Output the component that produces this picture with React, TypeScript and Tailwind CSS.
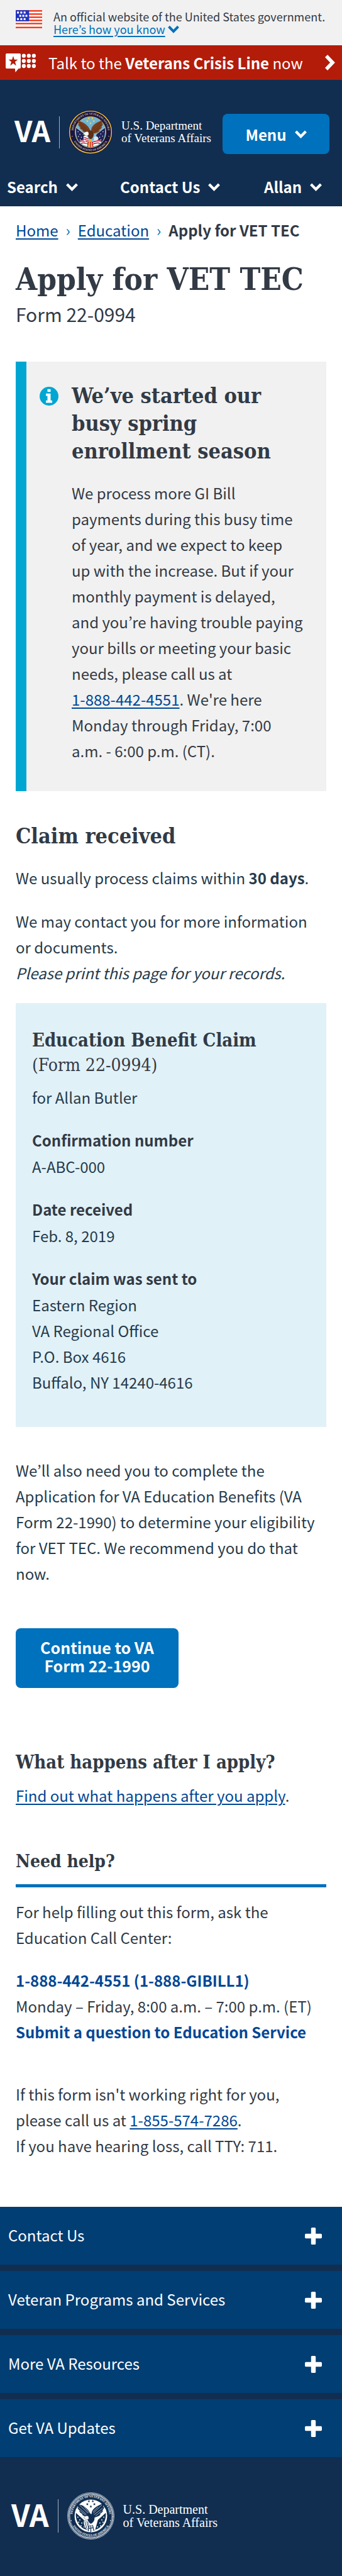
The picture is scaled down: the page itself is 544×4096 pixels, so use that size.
import type { ReactNode } from "react";

function ChevronDown({ className }: { className: string }) {
  return (
    <svg viewBox="0 0 19 13" className={className} fill="none" stroke="currentColor" strokeWidth="4.2" aria-hidden="true">
      <path d="M1.6 2 L9.5 10 L17.4 2" />
    </svg>
  );
}

function Flag() {
  const stars = [
    [5, 5], [18, 5], [31, 5],
    [14, 17], [26, 17], [38, 17],
    [5, 29], [18, 29], [31, 29],
  ];
  return (
    <svg viewBox="0 0 150 102" className="h-[29px] w-[42px] shrink-0" aria-hidden="true">
      <rect width="150" height="102" fill="#fff" />
      {[0, 18, 36, 54, 72, 94].map((y) => (
        <rect key={y} y={y} width="150" height="8" fill="#f22c0c" />
      ))}
      <rect width="76" height="63" fill="#2233c0" />
      {stars.map(([x, y]) => (
        <rect key={`${x}-${y}`} x={x * 1.45} y={y * 1.55} width="11" height="11" fill="#fff" />
      ))}
    </svg>
  );
}

function CrisisIcon() {
  return (
    <svg viewBox="0 0 168 105" className="h-[30px] w-[48px] shrink-0" fill="#fff" aria-hidden="true">
      <path d="M6 0H78Q84 0 84 6V78Q84 84 78 84H72L54 105L52 84H6Q0 84 0 78V6Q0 0 6 0Z" />
      <path
        fill="#b31c09"
        d="M42 14 L48.5 34.5 H68 L52.5 46.5 L58.5 68 L42 55 L25.5 68 L31.5 46.5 L16 34.5 H35.5 Z"
      />
      {[13, 42, 70].map((y) =>
        [101, 129, 157].map((x) => <circle key={`${x}-${y}`} cx={x} cy={y} r="11" />)
      )}
    </svg>
  );
}

const STAR = "M0 -7 L1.8 -2.2 L6.8 -2.2 L2.8 1 L4.3 6 L0 3 L-4.3 6 L-2.8 1 L-6.8 -2.2 L-1.8 -2.2 Z";
const SEAL_STARS = [[110, 45], [130, 45], [102, 60], [138, 60], [120, 72]];
const LEFT_WING =
  "M52 54 C58 62 64 62 70 64 C84 68 96 78 108 92 L120 112 L104 122 C92 124 82 120 74 112 L80 110 C70 108 64 102 60 95 L67 95 C58 90 53 84 52 76 L58 78 C52 70 50 62 52 54 Z";
const RIGHT_WING =
  "M180 54 C174 62 166 62 160 66 C146 72 134 82 126 96 L122 118 L140 128 C152 124 164 120 170 112 L165 110 C174 106 180 100 183 92 L176 94 C184 87 188 80 188 72 L182 76 C186 68 184 60 180 54 Z";

function SealText({ id, fill }: { id: string; fill: string }) {
  return (
    <>
      <path id={`${id}-top`} d="M30.5 150 A94.5 94.5 0 1 1 209.5 150" fill="none" />
      <path id={`${id}-bottom`} d="M15 128 A105.5 105.5 0 0 0 225 128" fill="none" />
      <g className="font-['Liberation_Serif',serif] text-[15px] font-bold" fill={fill} textAnchor="middle">
        <text>
          <textPath href={`#${id}-top`} startOffset="50%">DEPARTMENT OF VETERANS AFFAIRS</textPath>
        </text>
        <text>
          <textPath href={`#${id}-bottom`} startOffset="50%">UNITED STATES OF AMERICA</textPath>
        </text>
      </g>
      <circle cx="20" cy="143" r="2.5" fill={fill} />
      <circle cx="220" cy="143" r="2.5" fill={fill} />
    </>
  );
}

function ColorSeal() {
  return (
    <svg viewBox="0 0 240 240" className="size-[70px] shrink-0" aria-hidden="true">
      <circle cx="120" cy="120" r="120" fill="#191545" />
      <circle cx="120" cy="120" r="114.5" fill="none" stroke="#f2c53d" strokeWidth="5" />
      <circle cx="120" cy="120" r="84" fill="#6fb4d6" stroke="#d9b24a" strokeWidth="3" />
      <SealText id="seal-color" fill="#d8c58a" />
      {SEAL_STARS.map(([x, y]) => (
        <path key={`${x}-${y}`} d={STAR} transform={`translate(${x} ${y})`} fill="#f5d33c" />
      ))}
      <path d="M42 96 L84 128 L96 168 L60 176 C46 160 38 130 42 96 Z" fill="#1f2459" />
      <path d="M198 96 L154 126 L146 168 L180 176 C194 160 202 130 198 96 Z" fill="#1f2459" />
      {[[52, 118], [62, 132], [54, 144], [70, 148], [64, 162], [188, 118], [176, 130], [186, 142], [170, 148], [176, 162]].map(([x, y]) => (
        <circle key={`${x}-${y}`} cx={x} cy={y} r="2.6" fill="#fff" />
      ))}
      <path d="M58 170 C74 160 92 160 118 172 L110 196 C92 196 70 188 58 170 Z" fill="#fff" />
      <path d="M182 170 C166 160 148 160 122 172 L130 196 C148 196 170 188 182 170 Z" fill="#fff" />
      <path d="M58 172 C78 164 96 170 116 178 M68 182 C84 174 98 180 114 188 M182 172 C162 164 146 170 124 178 M172 182 C156 174 142 180 126 188" stroke="#c8102e" strokeWidth="5" fill="none" />
      <path d="M40 94 L104 142 M200 94 L140 140" stroke="#e6d9b0" strokeWidth="3" />
      <path d={LEFT_WING} fill="#7a3f1c" />
      <path d={RIGHT_WING} fill="#7a3f1c" />
      <path d="M62 66 L104 108 M60 78 L98 112 M68 94 L94 114 M176 66 L134 108 M178 82 L138 116 M170 98 L144 120" stroke="#4c240f" strokeWidth="2" />
      <path d="M104 116 C116 108 132 112 136 124 C140 140 132 154 120 160 C108 154 100 136 104 116 Z" fill="#5f2e14" />
      <path d="M108 120 C100 116 88 120 84 128 L78 132 L88 134 C94 140 104 140 110 134 Z" fill="#fff" />
      <path d="M84 128 L78 133 L88 134 Z" fill="#f0b51f" />
      <path d="M82 142 C92 138 102 142 106 150 L112 176 L96 182 C86 170 80 156 82 142 Z" fill="#fff" />
      <path d="M84 148 L108 158 M86 158 L110 168 M92 169 L112 177" stroke="#c8102e" strokeWidth="4.5" />
      <path d="M138 148 C150 138 160 144 164 156 C156 168 146 168 138 162 Z" fill="#dbe7f0" />
      <path d="M112 160 L124 158 L132 196 L120 208 L106 196 Z" fill="#e8b93a" />
      <path d="M108 172 L104 202 M118 172 L120 206 M128 172 L134 202" stroke="#c8102e" strokeWidth="4" />
    </svg>
  );
}

function MonoSeal() {
  return (
    <svg viewBox="0 0 240 240" className="size-[75px] shrink-0" aria-hidden="true">
      <circle cx="120" cy="120" r="118.5" fill="none" stroke="#fff" strokeWidth="2" />
      <circle cx="120" cy="120" r="112" fill="none" stroke="#fff" strokeWidth="6.5" strokeDasharray="4.6 2.4" />
      <circle cx="120" cy="120" r="106.5" fill="none" stroke="#fff" strokeWidth="1.5" />
      <circle cx="120" cy="120" r="83" fill="#fff" />
      <SealText id="seal-mono" fill="#fff" />
      {SEAL_STARS.map(([x, y]) => (
        <path key={`${x}-${y}`} d={STAR} transform={`translate(${x} ${y})`} fill="#112e51" />
      ))}
      <path d="M44 104 L84 140 L98 190 C66 182 40 148 44 104 Z" fill="#112e51" />
      <path d="M196 104 L156 140 L142 190 C174 182 200 148 196 104 Z" fill="#112e51" />
      {[[54, 126], [64, 140], [58, 152], [74, 156], [70, 170], [86, 176], [186, 126], [176, 140], [182, 152], [166, 156], [170, 170], [154, 176]].map(([x, y]) => (
        <circle key={`${x}-${y}`} cx={x} cy={y} r="3" fill="#fff" />
      ))}
      <path d={LEFT_WING} fill="#112e51" />
      <path d={RIGHT_WING} fill="#112e51" />
      <path d="M62 64 L106 106 M58 78 L98 112 M66 94 L94 116 M84 72 L112 104 M176 64 L132 106 M180 80 L136 114 M174 96 L144 120 M156 74 L130 100" stroke="#fff" strokeWidth="2" />
      <path d="M104 112 C116 106 132 110 138 124 C142 142 132 154 120 160 C106 152 98 136 104 112 Z" fill="#112e51" />
      <path d="M44 98 L98 146 M196 98 L142 146" stroke="#fff" strokeWidth="8" />
      <path d="M108 122 C100 116 88 120 84 130 L92 136 C98 140 106 138 110 134 Z" fill="#fff" stroke="#112e51" strokeWidth="1.5" />
      <path d="M84 146 C94 142 104 148 108 156 L112 182 L98 190 C88 174 80 160 84 146 Z" fill="#fff" stroke="#112e51" strokeWidth="2" />
      <path d="M90 150 L100 184 M100 150 L108 180" stroke="#112e51" strokeWidth="3" />
      <path d="M112 164 L126 160 L140 196 L122 204 L106 198 Z" fill="#fff" />
      <path d="M112 168 L106 198 M120 166 L120 204 M128 166 L136 196 M110 184 L134 180" stroke="#112e51" strokeWidth="4" />
    </svg>
  );
}

function InfoIcon() {
  return (
    <svg viewBox="0 0 36 36" className="mt-2 size-[30px] shrink-0" aria-hidden="true">
      <circle cx="18" cy="18" r="18" fill="#00a6d2" />
      <path fill="#fff" d="M15 4.5h6v5h-6z M12 13h9v13h3v4.5H12V26h3v-8.5h-3z" />
    </svg>
  );
}

function PlusIcon() {
  return (
    <svg viewBox="0 0 27 27" className="size-[27px] shrink-0" fill="#fff" aria-hidden="true">
      <rect x="9.8" width="7.4" height="27" rx="1.6" />
      <rect y="9.8" width="27" height="7.4" rx="1.6" />
    </svg>
  );
}

function TextLink({ href, children }: { href: string; children: ReactNode }) {
  return (
    <a href={href} className="whitespace-nowrap text-[#004795] underline decoration-2 underline-offset-[3px]">
      {children}
    </a>
  );
}

const serif = "font-['DejaVu_Serif_Condensed','DejaVu_Serif',serif] text-[#323a45]";

const navItems = ["Search", "Contact Us", "Allan"];
const footerItems = ["Contact Us", "Veteran Programs and Services", "More VA Resources", "Get VA Updates"];

function DetailHeading({ children }: { children: ReactNode }) {
  return <h4 className="mt-[27px] leading-[42px] font-bold text-[#323a45]">{children}</h4>;
}

export default function App() {
  return (
    <div className="min-h-screen bg-white font-['Noto_Sans_CJK_KR','Open_Sans',sans-serif] text-[24px] leading-[41px] text-[#323a45]">
      <div className="flex gap-[18px] bg-[#f1f1f1] py-4 pl-[25px]">
        <Flag />
        <div className="text-[18px] leading-[20px]">
          <p>An official website of the United States government.</p>
          <button type="button" className="flex items-center gap-1 text-[#0071bc]">
            <span className="underline decoration-2 underline-offset-[3px]">Here’s how you know</span>
            <ChevronDown className="h-[13px] w-[18px]" />
          </button>
        </div>
      </div>

      <a href="#crisis-line" className="flex h-[55px] items-center bg-[#b31c09] pr-[11px] pl-[9px] leading-[55px] text-white">
        <CrisisIcon />
        <span className="ml-5 grow">
          Talk to the <b>Veterans Crisis Line</b> now
        </span>
        <svg viewBox="0 0 16 25" className="h-[25px] w-[16px]" fill="none" stroke="currentColor" strokeWidth="5.6" aria-hidden="true">
          <path d="M2 2 L12 12.5 L2 23" />
        </svg>
      </a>

      <header className="bg-[#112e51] pt-12 pb-[15px] text-white">
        <div className="flex items-end justify-between pr-5 pl-[23px]">
          <a href="#home" className="flex items-center gap-[14px]">
            <span className="pb-2 text-[46px] leading-[56px] font-bold">VA</span>
            <span className="h-[51px] w-px bg-[#a3aebb]" />
            <ColorSeal />
            <span className="font-['Liberation_Serif',serif] text-[19px] leading-[20px] whitespace-nowrap">
              <span className="block">U.S. Department</span>
              <span className="block">of Veterans Affairs</span>
            </span>
          </a>
          <button type="button" className="flex h-16 w-[170px] items-center justify-center gap-[13px] rounded-lg bg-[#0071bc] font-bold">
            Menu
            <ChevronDown className="h-[13px] w-[19px]" />
          </button>
        </div>
        <nav className="mt-9 grid grid-cols-[1fr_229px_92px] pr-8 pl-[11px] leading-8 font-bold">
          {navItems.map((item) => (
            <button key={item} type="button" className="flex items-center gap-[13px] whitespace-nowrap">
              {item}
              <ChevronDown className="h-[13px] w-[19px] shrink-0" />
            </button>
          ))}
        </nav>
      </header>

      <main className="px-[25px]">
        <nav aria-label="Breadcrumb" className="flex gap-3 pt-[22px] leading-8">
          <TextLink href="#home">Home</TextLink>
          <span className="text-[#0071bc]">›</span>
          <TextLink href="#education">Education</TextLink>
          <span className="text-[#0071bc]">›</span>
          <b>Apply for VET TEC</b>
        </nav>

        <h1 className={`${serif} mt-8 text-[49px] leading-[60px] font-bold`}>Apply for VET TEC</h1>
        <p className="mt-[5px] text-[30px] leading-10">Form 22-0994</p>

        <section className="mt-14 flex gap-[21px] border-l-[17px] border-[#00a6d2] bg-[#f1f1f1] pt-8 pr-[34px] pb-11 pl-[21px]">
          <InfoIcon />
          <div>
            <h2 className={`${serif} text-[34px] leading-[44px] font-bold`}>
              We’ve started our busy spring enrollment season
            </h2>
            <p className="mt-6">
              We process more GI Bill payments during this busy time of year, and we expect to keep
              <br />
              up with the increase. But if your monthly payment is delayed, and you’re having trouble paying your bills or
              meeting your basic needs, please call us at <TextLink href="tel:18884424551">1-888-442-4551</TextLink>. We're here
              Monday through Friday, 7:00 a.m. - 6:00 p.m. (CT).
            </p>
          </div>
        </section>

        <section className="text-[#263b4b]">
          <h2 className={`${serif} mt-[49px] text-[34px] leading-[44px] font-bold`}>Claim received</h2>
          <p className="mt-6">
            We usually process claims within <b>30 days</b>.
          </p>
          <p className="mt-7 pr-2">We may contact you for more information or documents.</p>
          <p className="italic">Please print this page for your records.</p>

          <div className="mt-7 bg-[#e1f1f8] px-[26px] pt-[39px] pb-[51px]">
            <h3 className={`${serif} text-[29px] leading-10 font-bold`}>
              Education Benefit Claim
              <span className="block text-[28px] font-normal">(Form 22-0994)</span>
            </h3>
            <p className="mt-[10px]">for Allan Butler</p>
            <DetailHeading>Confirmation number</DetailHeading>
            <p>A-ABC-000</p>
            <DetailHeading>Date received</DetailHeading>
            <p>Feb. 8, 2019</p>
            <DetailHeading>Your claim was sent to</DetailHeading>
            <address className="not-italic">
              <p>Eastern Region</p>
              <p>VA Regional Office</p>
              <p>P.O. Box 4616</p>
              <p>Buffalo, NY 14240-4616</p>
            </address>
          </div>

          <p className="mt-12 pr-2">
            We’ll also need you to complete the Application for VA Education Benefits (VA Form 22-1990) to determine your
            eligibility for VET TEC. We recommend you do that now.
          </p>
        </section>

        <a
          href="#form-22-1990"
          className="mt-[67px] block w-[259px] rounded-lg bg-[#0071bc] px-9 pt-4 pb-[21px] text-center text-[25px] leading-[29px] font-bold text-white"
        >
          Continue to VA Form 22-1990
        </a>

        <section className="mt-[98px]">
          <h3 className={`${serif} text-[29px] leading-10 font-bold`}>What happens after I apply?</h3>
          <p className="mt-3">
            <TextLink href="#after-you-apply">Find out what happens after you apply</TextLink>.
          </p>
        </section>

        <section className="mt-[65px] pb-[77px]">
          <h3 className={`${serif} border-b-[5px] border-[#0071bc] pb-4 text-[28px] leading-10 font-bold`}>Need help?</h3>
          <p className="mt-[18px] pr-2">For help filling out this form, ask the Education Call Center:</p>
          <div className="mt-[27px] whitespace-nowrap">
            <a href="tel:18884424551" className="block font-bold text-[#004795]">
              1-888-442-4551 (1-888-GIBILL1)
            </a>
            <p>Monday – Friday, 8:00 a.m. – 7:00 p.m. (ET)</p>
            <a href="#ask" className="block font-bold text-[#004795]">
              Submit a question to Education Service
            </a>
          </div>
          <p className="mt-[58px] pr-2">
            If this form isn't working right for you, please call us at{" "}
            <TextLink href="tel:18555747286">1-855-574-7286</TextLink>.
          </p>
          <p>If you have hearing loss, call TTY: 711.</p>
        </section>
      </main>

      <footer className="bg-[#112e51] text-white">
        <ul className="flex flex-col gap-[10px]">
          {footerItems.map((item) => (
            <li key={item}>
              <button type="button" className="flex h-[92px] w-full items-center justify-between bg-[#003e73] pr-8 pl-[13px]">
                <span className="pb-1">{item}</span>
                <PlusIcon />
              </button>
            </li>
          ))}
        </ul>
        <a href="#home" className="flex items-center gap-[14px] pt-14 pb-[58px] pl-[18px]">
          <span className="pb-2 text-[48px] leading-[56px] font-bold">VA</span>
          <span className="h-[53px] w-px bg-[#a3aebb]" />
          <MonoSeal />
          <span className="font-['Liberation_Serif',serif] text-[20px] leading-[21px] whitespace-nowrap">
            <span className="block">U.S. Department</span>
            <span className="block">of Veterans Affairs</span>
          </span>
        </a>
      </footer>
    </div>
  );
}
